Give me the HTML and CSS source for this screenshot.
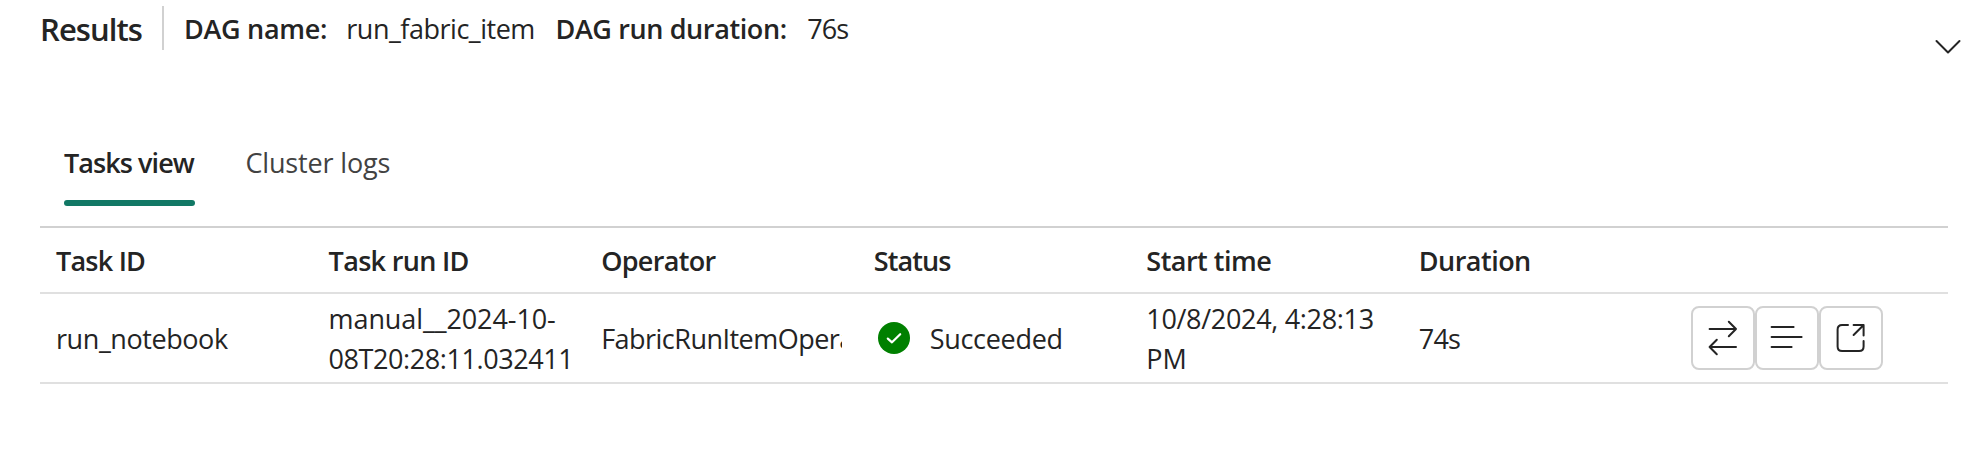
FILE: index.html
```html
<!DOCTYPE html>
<html lang="en">
<head>
<meta charset="utf-8">
<title>Results</title>
<link rel="stylesheet" href="styles.css">
</head>
<body>
<main class="panel">
  <header class="summary">
    <h1 class="title">Results</h1>
    <span class="text label name-label">DAG name:</span>
    <span class="text name-value">run_fabric_item</span>
    <span class="text label duration-label">DAG run duration:</span>
    <span class="text seconds">76s</span>
    <svg class="chevron" viewBox="0 0 28 16" width="28" height="16"><path d="M2.5 2L14 13.5L25.5 2"/></svg>
  </header>
  <nav class="tabs">
    <a class="tab tab-active">Tasks view</a>
    <a class="tab tab-logs">Cluster logs</a>
  </nav>
  <section class="table">
    <div class="row head">
      <div class="cell h-task">Task ID</div>
      <div class="cell h-run">Task run ID</div>
      <div class="cell h-operator">Operator</div>
      <div class="cell h-status">Status</div>
      <div class="cell h-start">Start time</div>
      <div class="cell h-duration">Duration</div>
      <div class="cell"></div>
    </div>
    <div class="row body-row">
      <div class="cell task">run_notebook</div>
      <div class="cell"><div><span class="run-date">manual__2024-10-</span><br><span class="run-time">08T20:28:11.032411</span></div></div>
      <div class="cell"><div class="operator">FabricRunItemOperator</div></div>
      <div class="cell status">
        <svg class="check" viewBox="0 0 32 32" width="32" height="32"><circle cx="16" cy="16" r="16"/><path d="M9.8 16.6L14 20.3L22.2 12.2"/></svg>
        <span class="text">Succeeded</span>
      </div>
      <div class="cell"><div><span class="start">10/8/2024, 4:28:13</span><br>PM</div></div>
      <div class="cell seconds">74s</div>
      <div class="cell actions">
        <button class="action" aria-label="Transfer"><svg viewBox="0 0 64 64"><path d="M18.6 23H45M37.8 15.8L45 23L37.8 30.2M45 41H18.6M25.8 33.8L18.6 41L25.8 48.2"/></svg></button>
        <button class="action" aria-label="Logs"><svg viewBox="0 0 64 64"><path d="M16.6 21H38.6M16.6 31H46.6M16.6 41H36.6"/></svg></button>
        <button class="action" aria-label="Open"><svg viewBox="0 0 64 64"><path d="M29 19H23.1Q18.6 19 18.6 23.5V40.5Q18.6 45 23.1 45H40.1Q44.6 45 44.6 40.5V35M34.6 19H44.6V29.5M44.6 19L34.6 29"/></svg></button>
      </div>
    </div>
  </section>
</main>
</body>
</html>
```
FILE: styles.css
```css
* { box-sizing: border-box; }

body {
  margin: 0;
  background: #fff;
  color: #242424;
  font: 400 27px/40px "Open Sans", "Noto Sans", sans-serif;
  white-space: nowrap;
}

.panel { padding: 0 19px 0 40px; }

.summary {
  display: grid;
  grid-template-columns: 144px 162.3px 209.2px 251.8px 1fr 28px;
  align-items: center;
  height: 56px;
}
.title {
  width: 124px;
  height: 44px;
  margin: 0;
  padding-top: 1px;
  border-right: 2px solid #d1d1d1;
  font-size: 31px;
  line-height: 44px;
  font-weight: 600;
  letter-spacing: -0.92px;
}
.text { padding-top: 2px; }
.label { font-weight: 600; }
.name-label { letter-spacing: -0.29px; }
.name-value { letter-spacing: -0.48px; }
.duration-label { letter-spacing: -0.38px; }
.seconds { letter-spacing: -0.9px; }

svg path {
  fill: none;
  stroke: #242424;
  stroke-width: 2;
  stroke-linecap: round;
  stroke-linejoin: round;
}
.chevron { align-self: end; margin-bottom: 1px; }

.tabs {
  display: flex;
  gap: 50.4px;
  height: 150px;
  margin-bottom: 20px;
  padding: 87px 24px 0;
}
.tab { letter-spacing: -0.15px; color: #424242; }
.tab-active {
  width: 131px;
  color: #242424;
  font-weight: 600;
  letter-spacing: -0.93px;
}
.tab-active::after {
  content: "";
  display: block;
  height: 6px;
  margin-top: 17px;
  border-radius: 4px;
  background: #117865;
}

.table { width: 1908px; border-top: 2px solid #d1d1d1; }
.row {
  display: grid;
  grid-template-columns: repeat(7, 1fr);
  border-bottom: 2px solid #e0e0e0;
}
.head { height: 66px; font-weight: 600; }
.body-row { height: 90px; }
.cell {
  display: flex;
  align-items: center;
  min-width: 0;
  padding: 2px 16px 0;
}

.h-task { letter-spacing: -0.78px; }
.h-run { letter-spacing: -0.67px; }
.h-operator { letter-spacing: -0.68px; }
.h-status { letter-spacing: -0.9px; }
.h-start { letter-spacing: -0.5px; }
.h-duration { letter-spacing: -0.53px; }
.task { letter-spacing: -0.42px; }
.run-date { letter-spacing: -0.09px; }
.run-time { letter-spacing: -0.42px; }
.operator { overflow: hidden; letter-spacing: -0.52px; }
.start { letter-spacing: -0.32px; }

.status { gap: 20px; padding: 0 16px 0 20px; letter-spacing: -0.3px; }
.check circle { fill: #008000; }
.check path { stroke: #fff; stroke-width: 2.2; }

.actions { padding-top: 0; }
.action {
  flex: none;
  width: 64px;
  height: 64px;
  padding: 0;
  border: 2px solid #d1d1d1;
  border-radius: 8px;
  background: #fff;
}
.action svg { display: block; width: 64px; height: 64px; margin: -2px; }
```
